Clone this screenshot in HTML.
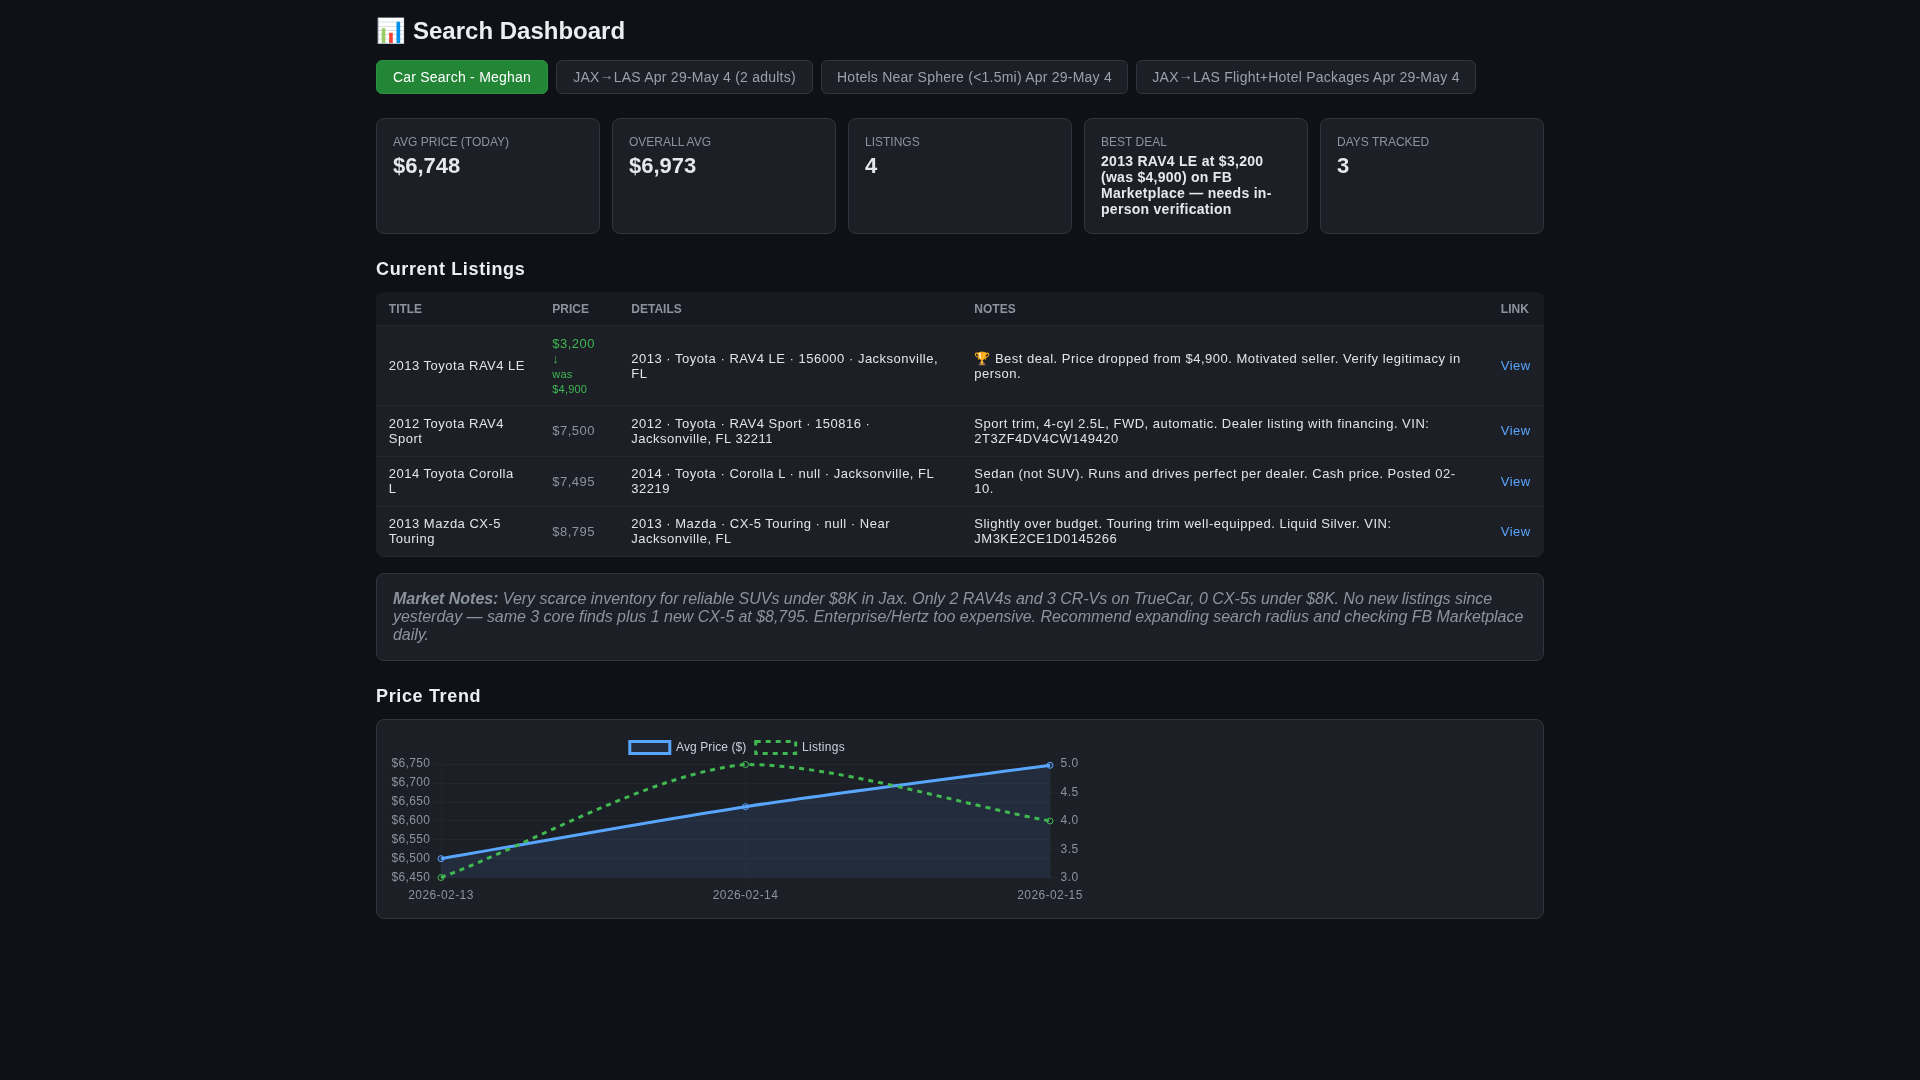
<!DOCTYPE html>
<html>
<head>
<meta charset="utf-8">
<style>
*{box-sizing:border-box;}
html,body{margin:0;padding:0;}
body{background:#0f1117;color:#e6e8eb;font-family:"Liberation Sans",sans-serif;font-size:14px;width:1920px;height:1080px;overflow:hidden;}
.page{position:relative;width:1920px;height:1080px;will-change:transform;}
.container{width:1168px;margin:0 0 0 376px;position:relative;}
h1{font-size:24px;font-weight:700;margin:0;height:60px;padding-top:16.5px;line-height:28px;color:#eceef1;white-space:nowrap;}
h1 .emo{display:inline-block;width:37px;}
.tabs{display:flex;gap:8px;height:34px;}
.tab{height:34px;line-height:32px;border:1px solid #30363d;border-radius:6px;background:#1c1f26;color:#9aa1ab;font-size:14px;white-space:nowrap;text-align:center;letter-spacing:0.23px;}
.tab.active{background:#238636;border-color:#2a9142;color:#fff;}
.stats{display:grid;grid-template-columns:repeat(5,224px);gap:12px;margin-top:24px;height:116px;}
.stat{background:#1c1f26;border:1px solid #30363d;border-radius:8px;padding:16px;height:116px;}
.stat .label{font-size:12px;color:#8b949e;text-transform:uppercase;line-height:14px;height:14px;white-space:nowrap;letter-spacing:0px;}
.stat .value{font-size:22px;font-weight:700;margin-top:4px;line-height:26px;color:#e6e8eb;}
.stat .value.small{font-size:14px;line-height:16px;margin-top:4px;white-space:nowrap;letter-spacing:0.28px;}
h2{font-size:18px;font-weight:700;margin:0;line-height:22px;height:22px;color:#eceef1;white-space:nowrap;letter-spacing:0.65px;}
h2.listings{margin-top:24px;margin-bottom:12px;}
.tablewrap{background:#1c1f26;border-radius:8px;overflow:hidden;height:265px;}
table{border-collapse:collapse;table-layout:fixed;width:1168px;}
th{background:#171a20;color:#8b949e;font-size:12px;font-weight:700;text-transform:uppercase;text-align:left;padding:9.6px 12.8px;line-height:14px;border-bottom:1px solid #24282f;white-space:nowrap;}
td{padding:9.6px 12.8px;font-size:13px;line-height:15px;border-bottom:1px solid #24282f;vertical-align:middle;color:#e1e4e8;letter-spacing:0.5px;white-space:nowrap;}
td.price{color:#8b949e;}
td.best{color:#3fb950;vertical-align:top;}
td.best small{font-size:11px;letter-spacing:0.2px;line-height:13px;}
a{color:#58a6ff;text-decoration:none;}
.ar{position:relative;top:-2px;}
.notes{margin-top:16px;background:#1c1f26;border:1px solid #30363d;border-radius:8px;padding:16px;height:88px;color:#8b949e;font-style:italic;font-size:16px;line-height:18px;white-space:nowrap;letter-spacing:-0.03px;}
.notes b{font-weight:700;}
h2.trend{margin-top:24px;margin-bottom:12px;}
.chart{background:#1c1f26;border:1px solid #30363d;border-radius:8px;height:200px;position:relative;}
.ov{position:absolute;left:0;top:0;pointer-events:none;}
</style>
</head>
<body>
<div class="page">
<div class="container">
<h1><span class="emo">📊</span>Search Dashboard</h1>
<div class="tabs">
<div class="tab active" style="width:172px">Car Search - Meghan</div>
<div class="tab" style="width:257px">JAX<span class="ar">→</span>LAS Apr 29-May 4 (2 adults)</div>
<div class="tab" style="width:307px">Hotels Near Sphere (&lt;1.5mi) Apr 29-May 4</div>
<div class="tab" style="width:340px">JAX<span class="ar">→</span>LAS Flight+Hotel Packages Apr 29-May 4</div>
</div>
<div class="stats">
<div class="stat"><div class="label">Avg Price (Today)</div><div class="value">$6,748</div></div>
<div class="stat"><div class="label">Overall Avg</div><div class="value">$6,973</div></div>
<div class="stat"><div class="label">Listings</div><div class="value">4</div></div>
<div class="stat"><div class="label">Best Deal</div><div class="value small">2013 RAV4 LE at $3,200<br>(was $4,900) on FB<br>Marketplace — needs in-<br>person verification</div></div>
<div class="stat"><div class="label">Days Tracked</div><div class="value">3</div></div>
</div>
<h2 class="listings">Current Listings</h2>
<div class="tablewrap">
<table>
<colgroup><col style="width:163.5px"><col style="width:79px"><col style="width:343px"><col style="width:526.5px"><col style="width:56px"></colgroup>
<thead><tr><th>Title</th><th>Price</th><th>Details</th><th>Notes</th><th>Link</th></tr></thead>
<tbody>
<tr style="height:80.2px"><td>2013 Toyota RAV4 LE</td><td class="best">$3,200<br>↓<br><small>was<br>$4,900</small></td><td>2013 · Toyota · RAV4 LE · 156000 · Jacksonville,<br>FL</td><td>🏆 Best deal. Price dropped from $4,900. Motivated seller. Verify legitimacy in<br>person.</td><td><a>View</a></td></tr>
<tr><td>2012 Toyota RAV4<br>Sport</td><td class="price">$7,500</td><td>2012 · Toyota · RAV4 Sport · 150816 ·<br>Jacksonville, FL 32211</td><td>Sport trim, 4-cyl 2.5L, FWD, automatic. Dealer listing with financing. VIN:<br>2T3ZF4DV4CW149420</td><td><a>View</a></td></tr>
<tr><td>2014 Toyota Corolla<br>L</td><td class="price">$7,495</td><td>2014 · Toyota · Corolla L · null · Jacksonville, FL<br>32219</td><td>Sedan (not SUV). Runs and drives perfect per dealer. Cash price. Posted 02-<br>10.</td><td><a>View</a></td></tr>
<tr><td>2013 Mazda CX-5<br>Touring</td><td class="price">$8,795</td><td>2013 · Mazda · CX-5 Touring · null · Near<br>Jacksonville, FL</td><td>Slightly over budget. Touring trim well-equipped. Liquid Silver. VIN:<br>JM3KE2CE1D0145266</td><td><a>View</a></td></tr>
</tbody>
</table>
</div>
<div class="notes"><b>Market Notes:</b> Very scarce inventory for reliable SUVs under $8K in Jax. Only 2 RAV4s and 3 CR-Vs on TrueCar, 0 CX-5s under $8K. No new listings since<br>yesterday — same 3 core finds plus 1 new CX-5 at $8,795. Enterprise/Hertz too expensive. Recommend expanding search radius and checking FB Marketplace<br>daily.</div>
<h2 class="trend">Price Trend</h2>
<div class="chart">
</div>
</div>
<svg class="ov" width="1920" height="1080" viewBox="0 0 1920 1080">
<line x1="433" y1="764.5" x2="1050.0" y2="764.5" stroke="#22262d" stroke-width="1"/>
<line x1="433" y1="783.5" x2="1050.0" y2="783.5" stroke="#22262d" stroke-width="1"/>
<line x1="433" y1="802.5" x2="1050.0" y2="802.5" stroke="#22262d" stroke-width="1"/>
<line x1="433" y1="820.5" x2="1050.0" y2="820.5" stroke="#22262d" stroke-width="1"/>
<line x1="433" y1="839.5" x2="1050.0" y2="839.5" stroke="#22262d" stroke-width="1"/>
<line x1="433" y1="858.5" x2="1050.0" y2="858.5" stroke="#22262d" stroke-width="1"/>
<line x1="433" y1="877.5" x2="1050.0" y2="877.5" stroke="#22262d" stroke-width="1"/>
<line x1="1050.0" y1="764.5" x2="1058.0" y2="764.5" stroke="#22262d" stroke-width="1"/>
<line x1="1050.0" y1="792.5" x2="1058.0" y2="792.5" stroke="#22262d" stroke-width="1"/>
<line x1="1050.0" y1="820.5" x2="1058.0" y2="820.5" stroke="#22262d" stroke-width="1"/>
<line x1="1050.0" y1="849.5" x2="1058.0" y2="849.5" stroke="#22262d" stroke-width="1"/>
<line x1="1050.0" y1="877.5" x2="1058.0" y2="877.5" stroke="#22262d" stroke-width="1"/>
<line x1="441.5" y1="764.5" x2="441.5" y2="885.5" stroke="#20242b" stroke-width="1"/>
<line x1="745.5" y1="764.5" x2="745.5" y2="885.5" stroke="#20242b" stroke-width="1"/>
<line x1="1050.5" y1="764.5" x2="1050.5" y2="885.5" stroke="#20242b" stroke-width="1"/>
<path d="M441.00,858.67 C532.35,843.08 653.91,820.75 745.50,806.70 C836.61,792.72 958.65,777.69 1050.00,765.25 L1050.0,877.5 L441.0,877.5 Z" fill="rgba(88,166,255,0.1)"/>
<path d="M441.00,858.67 C532.35,843.08 653.91,820.75 745.50,806.70 C836.61,792.72 958.65,777.69 1050.00,765.25" fill="none" stroke="#58a6ff" stroke-width="3"/>
<path d="M441.00,877.50 C532.35,843.60 651.98,773.18 745.50,764.50 C834.68,764.50 958.65,804.05 1050.00,821.00" fill="none" stroke="#3fb950" stroke-width="3" stroke-dasharray="5 5"/>
<circle cx="441.0" cy="858.67" r="3" fill="rgba(88,166,255,0.1)" stroke="#58a6ff" stroke-width="1"/>
<circle cx="745.5" cy="806.70" r="3" fill="rgba(88,166,255,0.1)" stroke="#58a6ff" stroke-width="1"/>
<circle cx="1050.0" cy="765.25" r="3" fill="rgba(88,166,255,0.1)" stroke="#58a6ff" stroke-width="1"/>
<circle cx="441.0" cy="877.50" r="3" fill="none" stroke="#3fb950" stroke-width="1"/>
<circle cx="745.5" cy="764.50" r="3" fill="none" stroke="#3fb950" stroke-width="1"/>
<circle cx="1050.0" cy="821.00" r="3" fill="none" stroke="#3fb950" stroke-width="1"/>
<g font-family="Liberation Sans" font-size="12" fill="#8b949e" letter-spacing="0.42">
<text x="430.2" y="767" text-anchor="end" letter-spacing="0.32">$6,750</text>
<text x="430.2" y="786" text-anchor="end" letter-spacing="0.32">$6,700</text>
<text x="430.2" y="805" text-anchor="end" letter-spacing="0.32">$6,650</text>
<text x="430.2" y="824" text-anchor="end" letter-spacing="0.32">$6,600</text>
<text x="430.2" y="843" text-anchor="end" letter-spacing="0.32">$6,550</text>
<text x="430.2" y="862" text-anchor="end" letter-spacing="0.32">$6,500</text>
<text x="430.2" y="881" text-anchor="end" letter-spacing="0.32">$6,450</text>
<text x="1060.6" y="767">5.0</text>
<text x="1060.6" y="796">4.5</text>
<text x="1060.6" y="824">4.0</text>
<text x="1060.6" y="853">3.5</text>
<text x="1060.6" y="881">3.0</text>
<text x="441.0" y="899" text-anchor="middle">2026-02-13</text>
<text x="745.5" y="899" text-anchor="middle">2026-02-14</text>
<text x="1050.0" y="899" text-anchor="middle">2026-02-15</text>
</g>
<rect x="629.8" y="741.5" width="40" height="12" fill="rgba(88,166,255,0.1)" stroke="#58a6ff" stroke-width="3"/>
<text x="676" y="751" font-family="Liberation Sans" font-size="12" fill="#c9d1d9" letter-spacing="0.1">Avg Price ($)</text>
<rect x="755.7" y="741.5" width="40" height="12" fill="none" stroke="#3fb950" stroke-width="3" stroke-dasharray="5 5"/>
<text x="802" y="751" font-family="Liberation Sans" font-size="12" fill="#c9d1d9" letter-spacing="0.3">Listings</text>
</svg>
</div>
</body>
</html>
